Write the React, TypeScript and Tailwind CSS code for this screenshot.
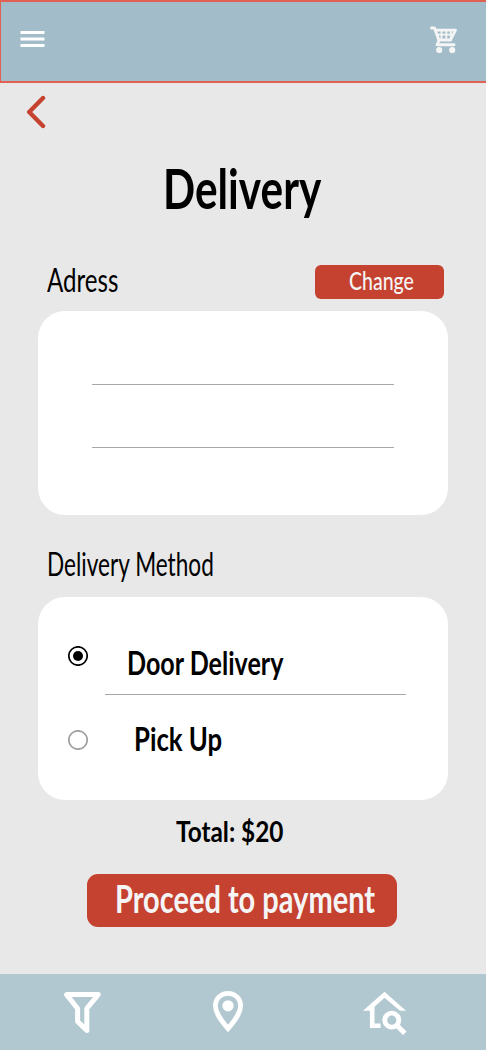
import React from "react";

function CartIcon() {
  return (
    <svg width="28" height="28" viewBox="0 0 28 28" fill="none" stroke="#f5f5f5" strokeLinecap="round" strokeLinejoin="round">
      <path d="M1.5 2H4.5L9 14.5L7 18.8H24" strokeWidth="2.9" />
      <path d="M5.5 4.2H25.5L20.5 14H9" strokeWidth="2.8" />
      <path d="M8 8.6H23M11.5 5V14M16.3 5V14M20.8 5V14" strokeWidth="1.9" />
      <circle cx="9.2" cy="24" r="3.1" fill="#f5f5f5" stroke="none" />
      <circle cx="22.2" cy="24" r="3.1" fill="#f5f5f5" stroke="none" />
    </svg>
  );
}

function Radio({ checked }: { checked?: boolean }) {
  return (
    <svg width="20" height="20" viewBox="0 0 20 20" fill="none">
      <circle cx="10" cy="10" r="9.2" stroke={checked ? "#000" : "#9e9e9e"} strokeWidth="1.7" />
      {checked && <circle cx="10" cy="10" r="5" fill="#000" />}
    </svg>
  );
}

export default function App() {
  return (
    <div className="flex h-[1050px] w-[486px] flex-col overflow-hidden bg-[#e8e8e8] font-['Lato',sans-serif] leading-none whitespace-nowrap text-black">
      <header className="flex h-[83px] shrink-0 justify-between border-y-2 border-l border-[#e06052] bg-[#a2bdc9] pr-[28px] pl-[19px]">
        <svg className="mt-[28px]" width="25" height="18" viewBox="0 0 25 18" stroke="#fff" strokeWidth="3">
          <path d="M0.5 2.5H24.5M0.5 9H24.5M0.5 15.5H24.5" />
        </svg>
        <div className="mt-[24px]"><CartIcon /></div>
      </header>

      <main className="flex h-[891px] shrink-0 flex-col">
        <svg className="mt-[12px] ml-[26px] shrink-0" width="20" height="34" viewBox="0 0 20 34" fill="none" stroke="#c54130" strokeWidth="4.4" strokeLinecap="round" strokeLinejoin="round">
          <path d="M17 3L3.2 17L17 31" />
        </svg>
        <h1 className="mt-[32px] ml-[162.5px] h-[55px] w-[200px] origin-left scale-x-[0.77] text-[55px] font-bold">Delivery</h1>

        <div className="mt-[46px] flex h-[49px] shrink-0 items-start justify-between pr-[42px] pl-[47px]">
          <h2 className="mt-px w-[100px] origin-left scale-x-[0.73] text-[33px] font-normal">Adress</h2>
          <button className="mt-[3px] flex h-[33.5px] w-[129px] rounded-[6px] bg-[#c54130] pt-[3px] pl-[34px]">
            <span className="w-[90px] origin-left scale-x-[0.78] text-left text-[25px] font-medium text-[#f5f5f5]">Change</span>
          </button>
        </div>

        <section className="ml-[38px] flex h-[204px] w-[410px] shrink-0 flex-col rounded-[27px] bg-white pt-[73px] pl-[54px]">
          <div className="h-px w-[302px] bg-[#a8a8a8]" />
          <div className="mt-[62px] h-px w-[302px] bg-[#a8a8a8]" />
        </section>

        <h2 className="mt-[32px] ml-[46.5px] h-[33px] w-[230px] origin-left scale-x-[0.685] text-[33px] font-normal">Delivery Method</h2>

        <section className="mt-[17px] ml-[38px] flex h-[203px] w-[410px] shrink-0 flex-col rounded-[27px] bg-white pt-[47px]">
          <div className="flex h-[50px] pl-[30px]">
            <div className="mt-[2px]"><Radio checked /></div>
            <span className="mt-[2px] ml-[39px] w-[200px] origin-left scale-x-[0.76] text-[33px] font-bold">Door Delivery</span>
          </div>
          <div className="ml-[67px] h-px w-[301px] bg-[#a8a8a8]" />
          <div className="mt-[26px] flex pl-[30px]">
            <div className="mt-[9px]"><Radio /></div>
            <span className="mt-px ml-[45.5px] w-[150px] origin-left scale-x-[0.78] text-[33px] font-bold">Pick Up</span>
          </div>
        </section>

        <p className="mt-[16px] ml-[176px] h-[29px] w-[127px] origin-left scale-x-[0.84] text-[29px] font-bold">Total: $20</p>
        <button className="mt-[29px] ml-[87px] flex h-[52.5px] w-[310px] shrink-0 rounded-[11px] bg-[#c54130] pt-[5px] pl-[28px]">
          <span className="w-[330px] shrink-0 origin-left scale-x-[0.763] text-left text-[38px] font-bold text-[#f5f5f5]">Proceed to payment</span>
        </button>
      </main>

      <footer className="flex h-[76px] shrink-0 items-start bg-[#b2c8d0] pt-[16px] pl-[62px]">
        <svg width="40" height="44" viewBox="0 0 40 44" fill="none" stroke="#fff" strokeWidth="5" strokeLinejoin="round">
          <path d="M4.6 4.6H36.2L24.8 18.5V40.4L15.6 31.5V18.5Z" />
        </svg>
        <svg className="ml-[110px]" width="32" height="44" viewBox="0 0 32 44">
          <path d="M16 3.3C8.8 3.3 3.4 8.8 3.4 15.8C3.4 22 7 28 16 38.6C25 28 28.6 22 28.6 15.8C28.6 8.8 23.2 3.3 16 3.3Z" fill="none" stroke="#fff" strokeWidth="4.8" />
          <circle cx="16" cy="15.8" r="5.6" fill="#fff" />
        </svg>
        <svg className="ml-[118px]" width="46" height="46" viewBox="0 0 46 46" fill="none" stroke="#fff">
          <path d="M10.2 17V35.8H18.5" strokeWidth="4.6" />
          <path d="M1 20.8L22.5 1.8L44 20.8H38L22.5 7.8L10 19V20.8Z" fill="#fff" stroke="none" />
          <circle cx="29.8" cy="30.2" r="7" strokeWidth="4.8" />
          <path d="M35 35.5L42.8 43.2" strokeWidth="5" />
        </svg>
      </footer>
    </div>
  );
}
